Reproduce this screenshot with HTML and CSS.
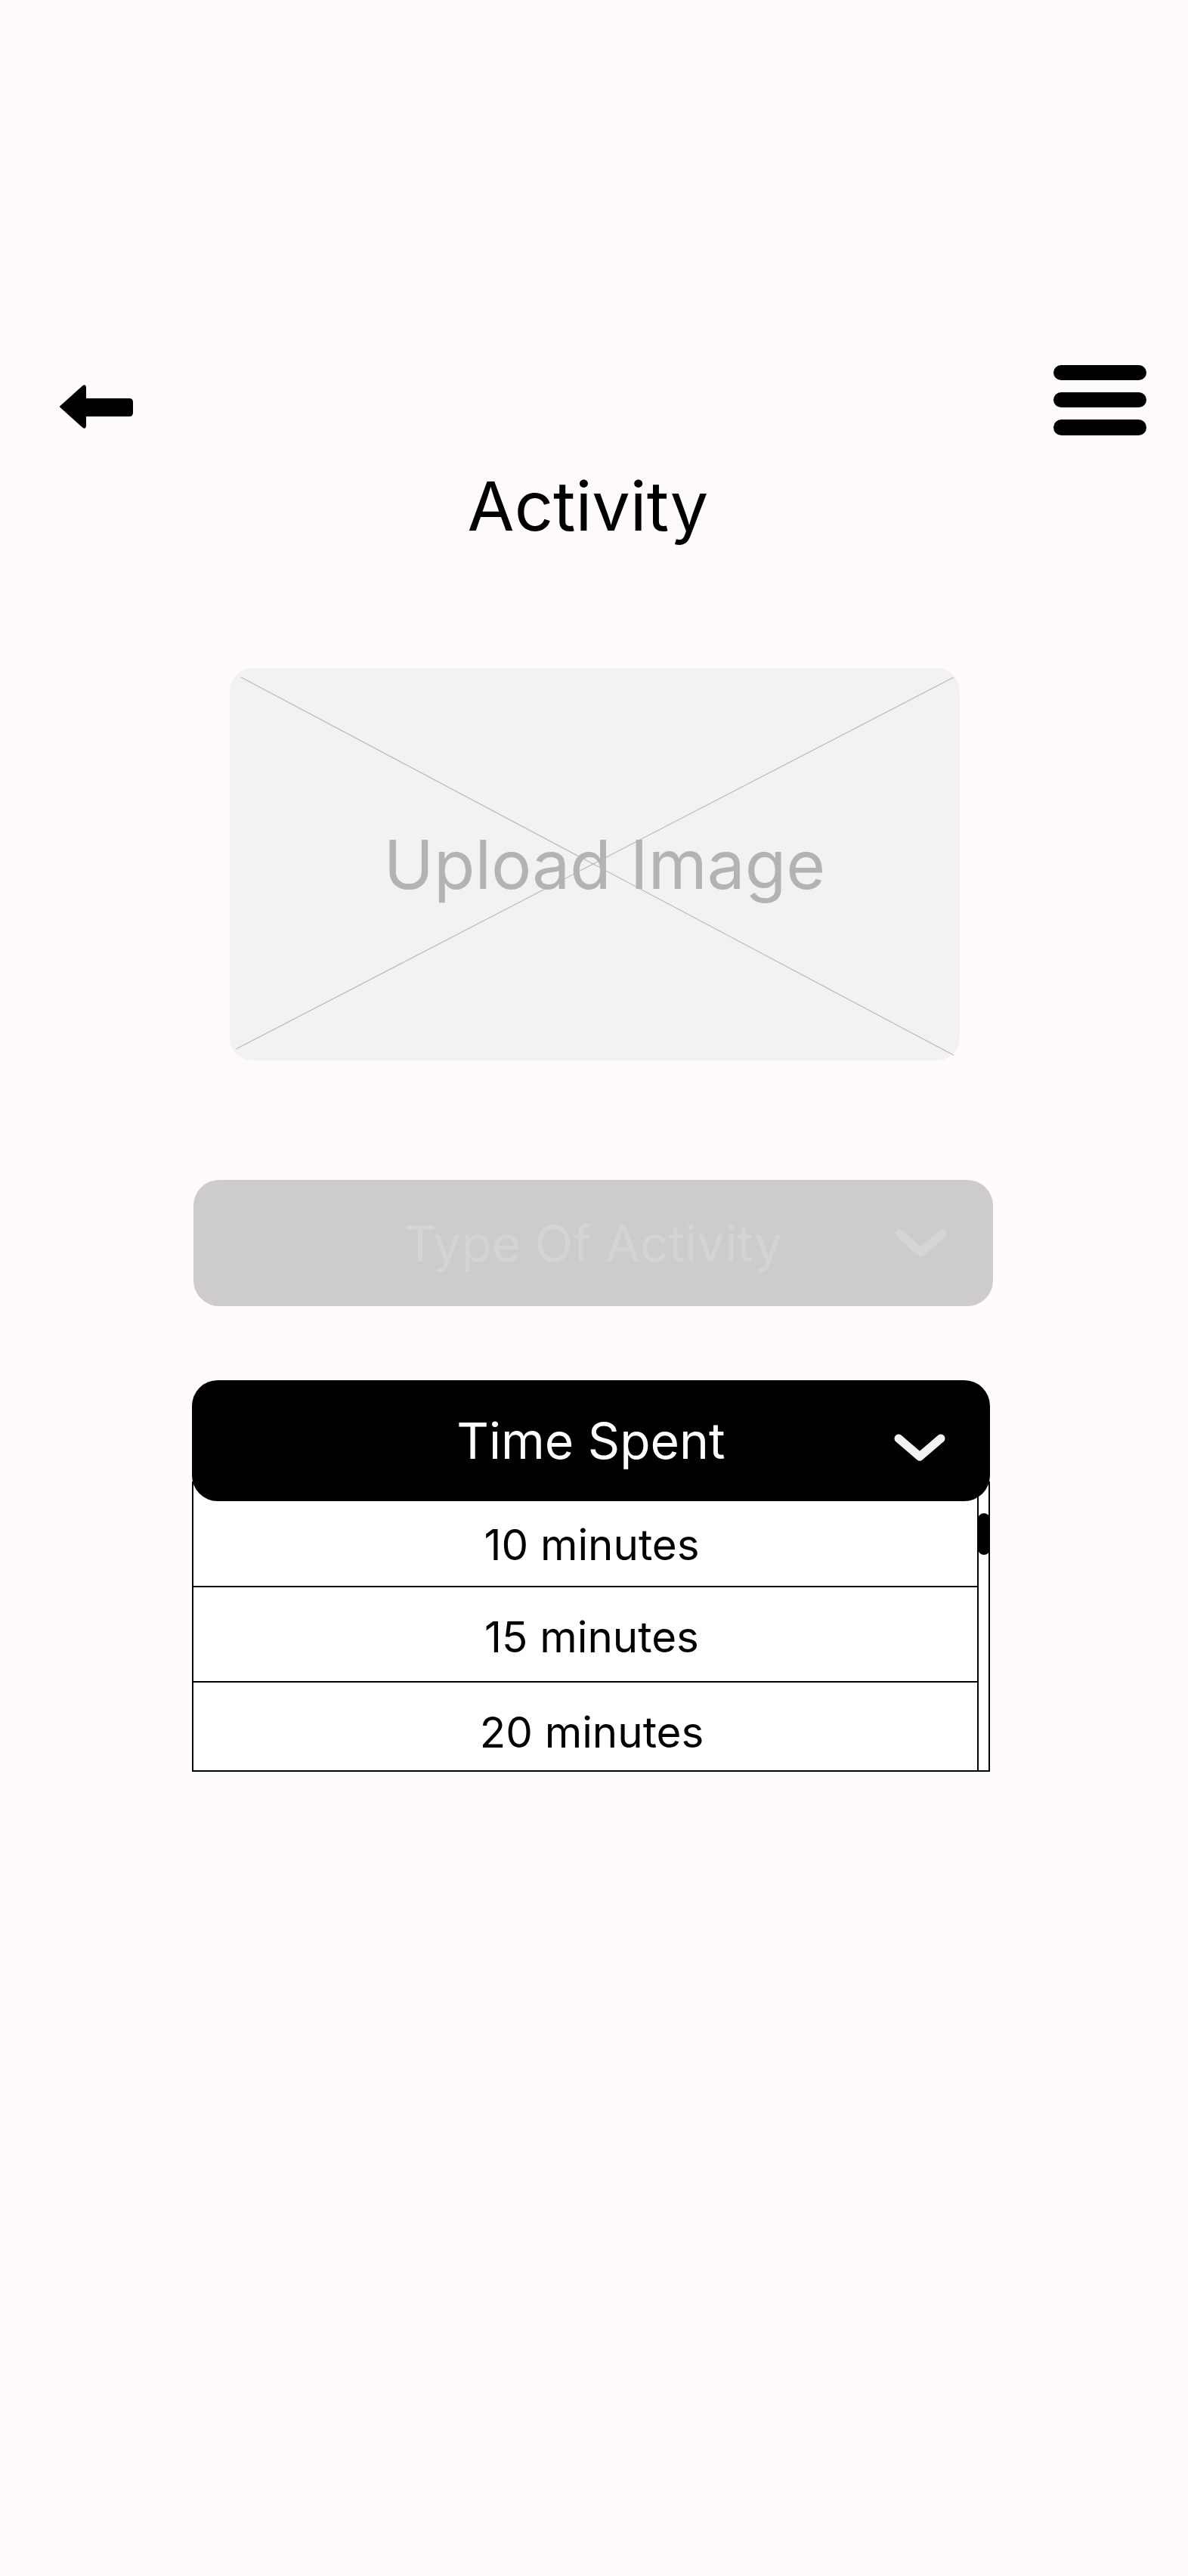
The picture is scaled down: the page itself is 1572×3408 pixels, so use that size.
FILE: index.html
```html
<!DOCTYPE html>
<html lang="en">
<head>
<meta charset="utf-8">
<title>Activity</title>
<link rel="stylesheet" href="styles.css">
</head>
<body>
<div class="page">
  <header class="topbar">
    <button class="icon-btn back" aria-label="Back">
      <svg width="100" height="64" viewBox="0 0 100 64">
        <path d="M3 31 L33 4 Q36 2 36 6 L36 21 L94 21 Q98 21 98 25 L98 39 Q98 43 94 43 L36 43 L36 56 Q36 60 33 58 Z" fill="#000" stroke="#000" stroke-width="2" stroke-linejoin="round"/>
      </svg>
    </button>
    <button class="icon-btn menu" aria-label="Menu">
      <svg width="123" height="93" viewBox="0 0 123 93">
        <rect x="0" y="0" width="123" height="20" rx="10" fill="#000"/>
        <rect x="0" y="36" width="123" height="20" rx="10" fill="#000"/>
        <rect x="0" y="72" width="123" height="21" rx="10.5" fill="#000"/>
      </svg>
    </button>
  </header>

  <h1 class="title">Activity</h1>

  <div class="upload">
    <svg class="upload-x" viewBox="0 0 966 519" preserveAspectRatio="none">
      <line x1="15" y1="12" x2="958" y2="512"/>
      <line x1="958" y1="12" x2="8" y2="504"/>
    </svg>
    <span class="upload-label">Upload Image</span>
  </div>

  <div class="select select-disabled">
    <span class="select-label">Type Of Activity</span>
    <svg class="chev chev-type" width="69" height="37" viewBox="0 0 69 37">
      <polyline points="6,6 34.5,31 63,6"/>
    </svg>
  </div>

  <div class="dropdown">
    <div class="select select-open">
      <span class="select-label">Time Spent</span>
      <svg class="chev chev-open" width="68" height="36" viewBox="0 0 68 36">
        <polyline points="6,6 34,30 62,6"/>
      </svg>
    </div>
    <div class="options">
      <ul class="option-list">
        <li class="option">10 minutes</li>
        <li class="option">15 minutes</li>
        <li class="option">20 minutes</li>
      </ul>
      <div class="scrolltrack"><div class="thumb"></div></div>
    </div>
  </div>
</div>
</body>
</html>
```

FILE: styles.css
```css
html, body {
  margin: 0;
  padding: 0;
  background: #fffbfa;
}

body {
  font-family: Inter, "Noto Sans", sans-serif;
  color: #000;
}

.page {
  width: 1572px;
  min-height: 3408px;
  padding-top: 483px;
  box-sizing: border-box;
  display: flex;
  flex-direction: column;
  align-items: flex-start;
}

.topbar {
  width: 100%;
  box-sizing: border-box;
  display: flex;
  justify-content: space-between;
  align-items: flex-start;
  padding: 0 55px 0 77px;
}

.icon-btn {
  border: 0;
  background: none;
  padding: 0;
  margin: 0;
  display: block;
  line-height: 0;
}

.icon-btn svg {
  display: block;
}

.back {
  margin-top: 24px;
}

.title {
  align-self: center;
  margin: 40px 16px 0 0;
  font-size: 90px;
  line-height: 108px;
  font-weight: 400;
  letter-spacing: 0;
}

.upload {
  position: relative;
  margin: 160px 0 0 304px;
  width: 966px;
  height: 519px;
  box-sizing: border-box;
  padding-left: 26px;
  background: #f2f2f1;
  border-radius: 30px;
  display: flex;
  align-items: center;
  justify-content: center;
}

.upload-x {
  position: absolute;
  inset: 0;
  width: 100%;
  height: 100%;
}

.upload-x line {
  stroke: #b9b9b9;
  stroke-width: 1.2;
}

.upload-label {
  position: relative;
  font-size: 89px;
  line-height: 108px;
  color: #b3b3b3;
}

.select {
  display: grid;
  grid-template-columns: 1fr auto 1fr;
  align-items: center;
  box-sizing: border-box;
}

.select-label {
  grid-column: 2;
  white-space: nowrap;
}

.chev {
  grid-column: 3;
  justify-self: end;
  display: block;
}

.chev polyline {
  fill: none;
  stroke-width: 11;
  stroke-linecap: round;
  stroke-linejoin: round;
}

.select-disabled {
  margin: 158px 0 0 256px;
  width: 1058px;
  height: 167px;
  border-radius: 34px;
  background: #cdccca;
}

.select-disabled .select-label {
  font-size: 66px;
  line-height: 80px;
  color: #d5d4d2;
}

.chev-type {
  margin-right: 61px;
}

.chev-type polyline {
  stroke: #d6d5d3;
}

.dropdown {
  margin: 98px 0 0 254px;
  width: 1056px;
  display: flex;
  flex-direction: column;
}

.select-open {
  position: relative;
  z-index: 1;
  height: 160px;
  border-radius: 34px;
  background: #000;
}

.select-open .select-label {
  font-size: 66px;
  line-height: 80px;
  color: #fff;
}

.chev-open {
  margin-right: 59px;
  margin-top: 18px;
}

.chev-open polyline {
  stroke: #f2f2f2;
}

.options {
  margin-top: -26px;
  height: 384px;
  box-sizing: border-box;
  border: 2px solid #000;
  background: #fff;
  display: flex;
  overflow: hidden;
}

.option-list {
  flex: 1;
  list-style: none;
  margin: 0;
  padding: 12px 0 0 0;
}

.option {
  height: 126px;
  box-sizing: border-box;
  padding: 6px 0 0 17px;
  border-bottom: 2px solid #000;
  display: flex;
  align-items: center;
  justify-content: center;
  font-size: 56.5px;
  color: #000;
}

.option:first-child {
  padding-top: 14px;
}

.scrolltrack {
  position: relative;
  width: 13px;
  border-left: 2px solid #000;
}

.thumb {
  position: absolute;
  left: -1px;
  top: 40px;
  width: 16px;
  height: 55px;
  border-radius: 8px;
  background: #000;
}
```
